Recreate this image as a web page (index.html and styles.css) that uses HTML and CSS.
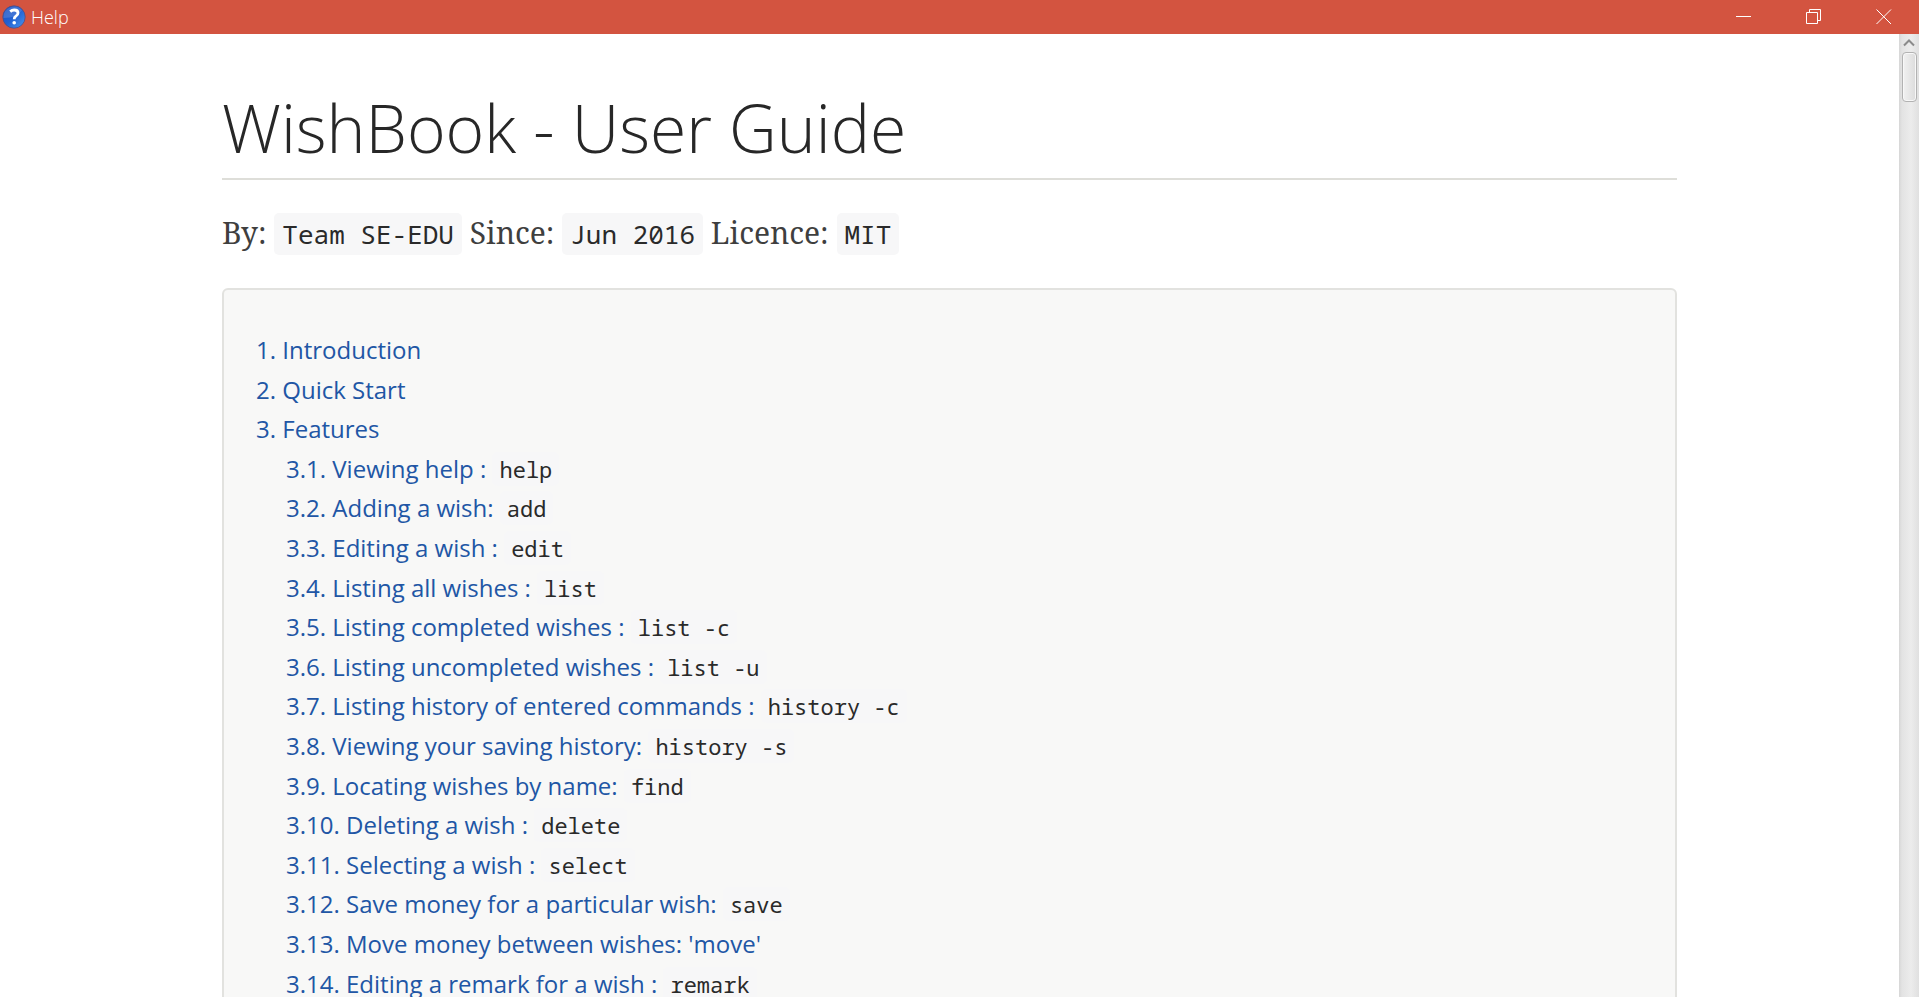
FILE: index.html
```html
<!DOCTYPE html>
<html lang="en">
<head>
<meta charset="utf-8">
<title>Help</title>
<link rel="stylesheet" href="styles.css">
</head>
<body>
<header class="titlebar">
  <svg class="app-icon" viewBox="0 0 24 24" aria-hidden="true">
    <defs>
      <linearGradient id="ball" x1="0" y1="0" x2="1" y2="1">
        <stop offset="0" stop-color="#1c4fc0"/>
        <stop offset="0.5" stop-color="#2261d2"/>
        <stop offset="1" stop-color="#4a98ee"/>
      </linearGradient>
    </defs>
    <circle cx="12" cy="12" r="11.2" fill="url(#ball)" stroke="#5c4a78" stroke-width="0.8"/>
    <path d="M1.5 13A10.6 10.6 0 0 1 20 5.2Q15 13 1.5 13Z" fill="#fff" opacity="0.14"/>
    <path d="M8.2 6.6Q10 5 12.2 5Q16 5 16 8Q16 9.800 13.900 11.200Q12.200 12.400 12.200 14.200" fill="none" stroke="#fff" stroke-width="2.800"/>
    <circle cx="12.200" cy="17.800" r="1.800" fill="#fff"/>
  </svg>
  <span class="window-title">Help</span>
  <div class="window-buttons">
    <button type="button" aria-label="Minimize"><svg viewBox="0 0 16 16"><path d="M0 7.500H15"/></svg></button>
    <button type="button" aria-label="Restore"><svg viewBox="0 0 16 16"><path d="M0.500 3.500H11.500V14.500H0.500ZM3.500 3.500V0.500H14.500V11.500H11.500"/></svg></button>
    <button type="button" aria-label="Close"><svg viewBox="0 0 16 16"><path d="M0.500 0.500L15 15M15 0.500L0.500 15"/></svg></button>
  </div>
</header>
<div class="viewport">
  <main class="page">
    <article class="guide">
      <h1>WishBook - User Guide</h1>
      <p class="byline">By: <code>Team SE-EDU</code> Since: <code>Jun 2016</code> Licence: <code>MIT</code></p>
      <nav class="toc" aria-label="Table of contents">
        <ul>
          <li><a href="#introduction">1. Introduction</a></li>
          <li><a href="#quick-start">2. Quick Start</a></li>
          <li><a href="#features">3. Features</a>
            <ul>
              <li><a href="#help">3.1. Viewing help : <code>help</code></a></li>
              <li><a href="#add">3.2. Adding a wish: <code>add</code></a></li>
              <li><a href="#edit">3.3. Editing a wish : <code>edit</code></a></li>
              <li><a href="#list">3.4. Listing all wishes : <code>list</code></a></li>
              <li><a href="#list-c">3.5. Listing completed wishes : <code>list -c</code></a></li>
              <li><a href="#list-u">3.6. Listing uncompleted wishes : <code>list -u</code></a></li>
              <li><a href="#history-c">3.7. Listing history of entered commands : <code>history -c</code></a></li>
              <li><a href="#history-s">3.8. Viewing your saving history: <code>history -s</code></a></li>
              <li><a href="#find">3.9. Locating wishes by name: <code>find</code></a></li>
              <li><a href="#delete">3.10. Deleting a wish : <code>delete</code></a></li>
              <li><a href="#select">3.11. Selecting a wish : <code>select</code></a></li>
              <li><a href="#save">3.12. Save money for a particular wish: <code>save</code></a></li>
              <li><a href="#move">3.13. Move money between wishes: 'move'</a></li>
              <li><a href="#remark">3.14. Editing a remark for a wish : <code>remark</code></a></li>
            </ul>
          </li>
        </ul>
      </nav>
    </article>
  </main>
  <div class="scrollbar">
    <button type="button" class="scroll-up" aria-label="Scroll up"><svg viewBox="0 0 12 8"><path d="M1 6.500L6 1.500L11 6.500"/></svg></button>
    <div class="thumb"></div>
  </div>
</div>
</body>
</html>
```
FILE: styles.css
```css
* { box-sizing: border-box; }

body {
  margin: 0;
  height: 100vh;
  display: flex;
  flex-direction: column;
  overflow: hidden;
  background: #fff;
  font-family: "Open Sans", sans-serif;
}

.titlebar {
  flex: none;
  display: flex;
  align-items: center;
  height: 34px;
  padding-left: 2px;
  background: #d35440;
  color: #fff;
}
.app-icon { width: 24px; height: 24px; }
.window-title {
  margin-left: 5px;
  font-size: 18px;
  font-weight: 300;
  line-height: 24px;
}
.window-buttons {
  display: flex;
  margin-left: auto;
}
.window-buttons button {
  display: flex;
  align-items: center;
  justify-content: center;
  width: 70px;
  height: 34px;
  padding: 0;
  border: 0;
  background: none;
}
.window-buttons svg {
  width: 16px;
  height: 16px;
  fill: none;
  stroke: #fff;
}

.viewport {
  flex: 1;
  min-height: 0;
  display: flex;
}
.page {
  flex: 1;
  overflow: hidden;
}
.guide {
  max-width: 1455px;
  margin: 0 auto;
}

h1 {
  margin: 0;
  padding: 51px 0 9px;
  border-bottom: 2px solid #deded9;
  color: #272727;
  font-size: 66px;
  font-weight: 300;
  line-height: 84px;
}

.byline {
  margin: 31px 0 32px;
  color: #3f3f3f;
  font-family: "Noto Serif", "Droid Serif", "DejaVu Serif", serif;
  font-size: 30px;
  line-height: 44px;
}

code {
  padding: 3px 8px;
  border-radius: 5px;
  background: #f7f7f8;
  color: #2a2a2a;
  font-family: "M+ 1mn", "Noto Sans Mono", "DejaVu Sans Mono", monospace;
  font-size: 26px;
}

.toc {
  padding: 40px 32px;
  border: 2px solid #e2e2df;
  border-radius: 6px;
  background: #f8f8f7;
  font-size: 24px;
  line-height: 1.65;
}
.toc ul {
  margin: 0;
  padding: 0;
  list-style: none;
}
.toc ul ul { padding-left: 30px; }
.toc a {
  color: #2156a5;
  text-decoration: none;
}
.toc code { font-size: 22px; line-height: 1; padding: 2px 7px; }

.scrollbar {
  flex: none;
  display: flex;
  flex-direction: column;
  align-items: center;
  width: 20px;
  background: linear-gradient(to right, #d6d6d6, #e3e3e3 15%, #ececec 60%, #e0e0e0);
}
.scroll-up {
  display: flex;
  align-items: center;
  justify-content: center;
  width: 20px;
  height: 18px;
  padding: 0;
  border: 0;
  background: none;
}
.scroll-up svg {
  width: 12px;
  height: 8px;
  fill: none;
  stroke: #8b8b8b;
  stroke-width: 2;
}
.thumb {
  width: 15px;
  height: 50px;
  border: 1px solid #b2b2b2;
  border-radius: 4px;
  background: linear-gradient(to right, #f1f1f1, #dcdcdc);
  box-shadow: inset 0 0 0 1px #f8f8f8;
}
```
